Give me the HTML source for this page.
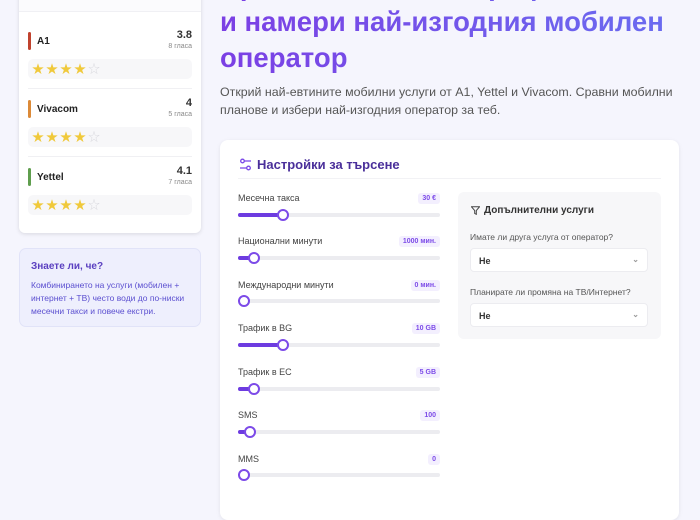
<!DOCTYPE html>
<html><head><meta charset="utf-8"><style>
*{box-sizing:border-box;margin:0;padding:0}
body{width:700px;height:500px;overflow:hidden;background:#f5f5fd;font-family:"Liberation Sans","Noto Sans CJK SC",sans-serif;position:relative;color:#222}
.abs{position:absolute}
.lcard{left:19px;top:-10px;width:182px;height:243px;background:#fff;border-radius:6px;box-shadow:0 1px 4px rgba(0,0,0,.12)}
.lhead{left:19px;top:0;width:182px;height:12px;background:#fbfbfd;border-bottom:1px solid #f0f0f4}
.op{position:absolute;left:28px;width:164px}
.bar{position:absolute;left:0;width:3px;height:18px;border-radius:2px}
.nm{position:absolute;left:9px;font-size:10px;font-weight:bold;color:#222}
.sc{position:absolute;right:0;font-size:11px;font-weight:bold;color:#333;text-align:right}
.vt{position:absolute;right:0;font-size:7px;color:#888}
.stars{position:absolute;left:0;width:164px;height:20px;background:#f7f7f9;border-radius:5px;font-size:12px;color:#f0c93b;padding-left:4px;line-height:20px;letter-spacing:2px}
.stars span{color:#d8d8de}
.div{position:absolute;left:28px;width:164px;height:1px;background:#f0f0f3}
.tip{left:19px;top:248px;width:182px;height:79px;background:#eeeffd;border:1px solid #e1e3f8;border-radius:7px;padding:12px 11px}
.tip b{display:block;font-size:10px;color:#5a3fc0;margin-bottom:7px}
.tip p{font-size:8.5px;line-height:13px;color:#5b4fd0}
h1{left:220px;top:-32px;width:480px;font-size:27.5px;line-height:36px;font-weight:bold;background:linear-gradient(90deg,#7b3fe4,#6a6cf0 95%);-webkit-background-clip:text;color:transparent;white-space:nowrap}
.sub{left:220px;top:83px;font-size:12.4px;line-height:18px;color:#555}
.main{left:220px;top:140px;width:459px;height:380px;background:#fff;border-radius:8px;box-shadow:0 1px 4px rgba(0,0,0,.08)}
.mt{left:257px;top:157px;font-size:13px;font-weight:bold;color:#4a2f9a}
.mdiv{left:238px;top:178px;width:423px;height:1px;background:#f2f2f5}
.lab{position:absolute;left:238px;font-size:9px;color:#444}
.badge{position:absolute;right:260px;font-size:7px;font-weight:bold;color:#7c4ae8;background:#f3effe;border-radius:3px;padding:2px 4px}
.track{position:absolute;left:238px;width:202px;height:4px;background:#ececf0;border-radius:2px}
.fill{position:absolute;left:0;top:0;height:4px;background:#6d3be0;border-radius:2px}
.thumb{position:absolute;top:-4px;width:12px;height:12px;border-radius:50%;background:#fff;border:2px solid #7c4ae8}
.rp{left:458px;top:192px;width:203px;height:147px;background:#f7f7f9;border-radius:6px}
.rt{position:absolute;left:13px;top:13px;font-size:10px;font-weight:bold;color:#333}
.q{position:absolute;left:12px;font-size:8.5px;color:#555}
.sel{position:absolute;left:12px;width:178px;height:24px;background:#fff;border:1px solid #ececf0;border-radius:4px;font-size:9px;font-weight:bold;color:#333;padding:7px 8px}
.sel i{position:absolute;right:8px;top:6px;font-style:normal;color:#999;font-size:8px}
</style></head><body>
<div class="abs lcard"></div>
<div class="abs lhead"></div>

<div class="op" style="top:32px"><div class="bar" style="background:#c0422e;top:0"></div><div class="nm" style="top:4px">A1</div><div class="sc" style="top:-3px">3.8</div><div class="vt" style="top:11px">8 гласа</div></div>
<div class="op" style="top:59px"><div class="stars">★★★★<span>☆</span></div></div>
<div class="div" style="top:88px"></div>
<div class="op" style="top:100px"><div class="bar" style="background:#dc8a38;top:0"></div><div class="nm" style="top:4px">Vivacom</div><div class="sc" style="top:-3px">4</div><div class="vt" style="top:11px">5 гласа</div></div>
<div class="op" style="top:127px"><div class="stars">★★★★<span>☆</span></div></div>
<div class="div" style="top:156px"></div>
<div class="op" style="top:168px"><div class="bar" style="background:#5f9e4e;top:0"></div><div class="nm" style="top:4px">Yettel</div><div class="sc" style="top:-3px">4.1</div><div class="vt" style="top:11px">7 гласа</div></div>
<div class="op" style="top:195px"><div class="stars">★★★★<span>☆</span></div></div>

<div class="abs tip"><b>Знаете ли, че?</b><p>Комбинирането на услуги (мобилен + интернет + ТВ) често води до по-ниски месечни такси и повече екстри.</p></div>

<h1 class="abs">Сравни мобилни тарифи<br>и намери най-изгодния мобилен<br>оператор</h1>
<div class="abs sub">Открий най-евтините мобилни услуги от A1, Yettel и Vivacom. Сравни мобилни<br>планове и избери най-изгодния оператор за теб.</div>

<div class="abs main"></div>
<svg class="abs" style="left:239px;top:158px" width="13" height="13" viewBox="0 0 13 13" fill="none" stroke="#7c4ae8" stroke-width="1.3"><circle cx="3.5" cy="3" r="1.8"/><path d="M5.3 3H12"/><circle cx="9.5" cy="10" r="1.8"/><path d="M1 10H7.7"/></svg>
<div class="abs mt">Настройки за търсене</div>
<div class="abs mdiv"></div>

<div class="lab" style="top:193px">Месечна такса</div><div class="badge" style="top:193px">30 €</div>
<div class="track" style="top:213px"><div class="fill" style="width:45px"></div><div class="thumb" style="left:39px"></div></div>
<div class="lab" style="top:236px">Национални минути</div><div class="badge" style="top:236px">1000 мин.</div>
<div class="track" style="top:256px"><div class="fill" style="width:16px"></div><div class="thumb" style="left:10px"></div></div>
<div class="lab" style="top:280px">Международни минути</div><div class="badge" style="top:280px">0 мин.</div>
<div class="track" style="top:299px"><div class="thumb" style="left:0"></div></div>
<div class="lab" style="top:323px">Трафик в BG</div><div class="badge" style="top:323px">10 GB</div>
<div class="track" style="top:343px"><div class="fill" style="width:45px"></div><div class="thumb" style="left:39px"></div></div>
<div class="lab" style="top:367px">Трафик в ЕС</div><div class="badge" style="top:367px">5 GB</div>
<div class="track" style="top:387px"><div class="fill" style="width:16px"></div><div class="thumb" style="left:10px"></div></div>
<div class="lab" style="top:410px">SMS</div><div class="badge" style="top:410px">100</div>
<div class="track" style="top:430px"><div class="fill" style="width:12px"></div><div class="thumb" style="left:6px"></div></div>
<div class="lab" style="top:454px">MMS</div><div class="badge" style="top:454px">0</div>
<div class="track" style="top:473px"><div class="thumb" style="left:0"></div></div>

<div class="abs rp">
<svg style="position:absolute;left:13px;top:14px" width="9" height="9" viewBox="0 0 9 9" fill="none" stroke="#444" stroke-width="1"><path d="M0.5 0.8H8.5L5.3 4.6V8.3L3.7 7.4V4.6Z"/></svg>
<div class="rt" style="left:26px">Допълнителни услуги</div>
<div class="q" style="top:40px">Имате ли друга услуга от оператор?</div>
<div class="sel" style="top:56px">Не<i>⌄</i></div>
<div class="q" style="top:95px">Планирате ли промяна на ТВ/Интернет?</div>
<div class="sel" style="top:111px">Не<i>⌄</i></div>
</div>
</body></html>
